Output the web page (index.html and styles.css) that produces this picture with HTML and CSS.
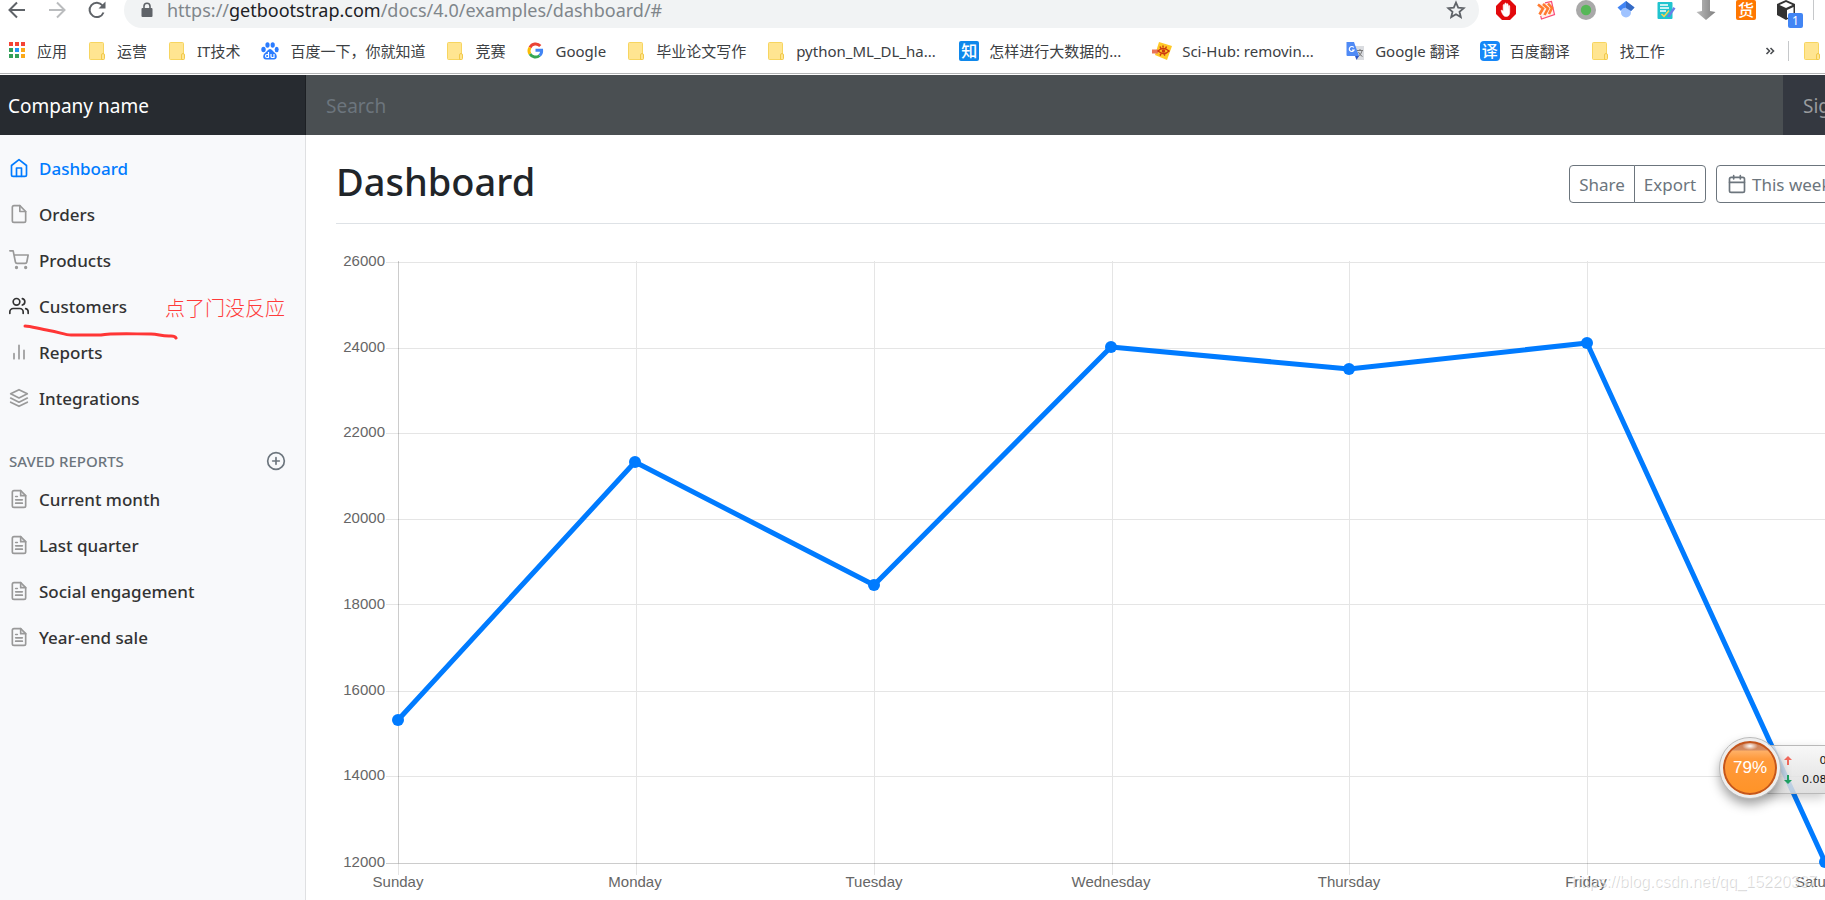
FILE: index.html
```html
<!DOCTYPE html>
<html lang="zh-CN">
<head>
<meta charset="utf-8">
<title>Dashboard Template</title>
<link rel="stylesheet" href="styles.css">
</head>
<body>
<svg class="defs" aria-hidden="true">
  <defs>
    <symbol id="folder" viewBox="0 0 20 20"><rect x="2.500" y="1.500" width="14" height="17" rx="1" fill="#ffe591" stroke="#f7d560"/><path d="M14.500 18.500v-4.500a1.500 1.500 0 0 1 3 0v3.500a1 1 0 0 1-1 1z" fill="#ffe591" stroke="#f2c94a"/></symbol>
    <symbol id="file-text" viewBox="0 0 24 24"><path d="M14 2H6a2 2 0 0 0-2 2v16a2 2 0 0 0 2 2h12a2 2 0 0 0 2-2V8z"/><path d="M14 2v6h6M16 13H8M16 17H8M10 9H8"/></symbol>
  </defs>
</svg>

<header class="browser">
  <div class="toolbar">
    <div class="nav-buttons">
      <button class="icon-button" aria-label="Back"><svg width="20" height="20" viewBox="0 0 20 20" fill="none" stroke="#5f6368" stroke-width="2"><path d="M18 10H3M10 2.500L2.500 10l7.500 7.500"/></svg></button>
      <button class="icon-button" aria-label="Forward"><svg width="20" height="20" viewBox="0 0 20 20" fill="none" stroke="#babcbe" stroke-width="2"><path d="M2 10h15M10 2.500L17.500 10 10 17.500"/></svg></button>
      <button class="icon-button" aria-label="Reload"><svg width="20" height="20" viewBox="0 0 20 20" fill="none" stroke="#5f6368" stroke-width="2"><path d="M16.500 12.500A7.200 7.200 0 1 1 15.500 5.500"/><path d="M18.500 1.500v7h-7z" fill="#5f6368" stroke="none"/></svg></button>
    </div>
    <div class="address">
      <svg width="12" height="16" viewBox="0 0 12 16"><rect x="0.500" y="6" width="11" height="9" rx="1" fill="#5f6368"/><path d="M3 6V4.200a3 3 0 0 1 6 0V6" fill="none" stroke="#5f6368" stroke-width="1.600"/></svg>
      <span class="url">https://<span class="host">getbootstrap.com</span>/docs/4.0/examples/dashboard/#</span>
      <button class="icon-button" aria-label="Bookmark this page"><svg width="20" height="20" viewBox="0 0 20 20" fill="none" stroke="#5f6368" stroke-width="1.800"><path d="M10 2.500l2.200 5.100 5.500.5-4.200 3.600 1.300 5.400-4.800-2.900-4.800 2.900 1.300-5.400L2.300 8.100l5.500-.5z"/></svg></button>
    </div>
    <div class="extensions">
      <svg viewBox="0 0 20 20"><path d="M6 0h8l6 6v8l-6 6H6l-6-6V6z" fill="#e2090c"/><path d="M5 10.500c1-.6 1.800.2 2.200 1V5.200c0-1 1.400-1 1.400 0V9l.2-5.200c0-1 1.500-1 1.500 0V9l.3-4.700c0-.9 1.400-.9 1.400 0V9.500l.4-3.500c.1-.8 1.300-.8 1.300.1V12c0 3-1.300 4.500-3.600 4.500-2.600 0-3.400-2-5.100-6z" fill="#fff" stroke="#fff" stroke-width=".6"/></svg>
      <svg viewBox="0 0 20 20"><path d="M1.500 4.500l14-3 3 13-13 4.500z" fill="#fff1ec"/><path d="M9 2.800l6.500-1.300 3 13-13 4.500-.8-3" fill="none" stroke="#fb4b77" stroke-width="1.200"/><path d="M2 4.500l5 4-3.500 6M7 4l5 4.500L8.500 15M12 3.500l4 4.500-3 6" fill="none" stroke="#ff7a2f" stroke-width="2.600"/></svg>
      <svg viewBox="0 0 20 20"><circle cx="10" cy="10" r="10" fill="#a9a9a9"/><circle cx="10" cy="10" r="5.200" fill="#56b757"/></svg>
      <svg viewBox="0 0 20 20"><circle cx="10" cy="12.500" r="5" fill="#a0c3ff"/><path d="M10 1l8.500 6.500-3.500 3.500a5.500 5.500 0 0 0-10 0L1.500 7.500z" fill="#4285f4"/><path d="M10 1l8.500 6.500L15 11 10 8z" fill="#356ac3"/></svg>
      <svg viewBox="0 0 20 20"><rect x="1.500" y="2" width="15" height="17" rx="1" fill="#20c4cf"/><path d="M4 5h8M4 8h9M4 11h6" stroke="#fff" stroke-width="1.400"/><path d="M5.500 14l2.500 2.500 5-6" fill="none" stroke="#ffd34c" stroke-width="1.500"/><path d="M11 17l6.500-10 2 1.500L13.500 17z" fill="#6b7de8"/></svg>
      <svg viewBox="0 0 20 20"><defs><linearGradient id="arrow"><stop stop-color="#bbb"/><stop offset="1" stop-color="#808080"/></linearGradient></defs><path d="M6 0h8v11l5.500 1L10 20 .5 12 6 11z" fill="url(#arrow)"/></svg>
      <span class="tile tile-goods">货</span>
      <span class="extension-box"><svg viewBox="0 0 20 20"><path d="M10 0l9 4v11l-9 5-9-5V4z" fill="#333"/><path d="M3.500 5L10 2l6.500 3L10 8zM11 10l6.500-3v7.500L11 18z" fill="#fff"/></svg><span class="badge">1</span></span>
    </div>
    <span class="divider"></span>
  </div>

  <nav class="bookmarks" aria-label="Bookmarks">
    <a class="bookmark" href="#"><svg viewBox="0 0 20 20"><path fill="#f44336" d="M2 1h4v4H2zM8 1h4v4H8zM14 1h4v4h-4z"/><path fill="#34a05a" d="M2 7h4v4H2zM2 13h4v4H2zM8 13h4v4H8z"/><path fill="#2196f3" d="M8 7h4v4H8z"/><path fill="#fba919" d="M14 7h4v4h-4zM14 13h4v4h-4z"/></svg><span>应用</span></a>
    <a class="bookmark" href="#"><svg><use href="#folder"/></svg><span>运营</span></a>
    <a class="bookmark" href="#"><svg><use href="#folder"/></svg><span>IT技术</span></a>
    <a class="bookmark" href="#"><svg viewBox="0 0 20 20" fill="#2a7cff"><ellipse cx="3.500" cy="8.500" rx="2.200" ry="2.800"/><ellipse cx="7.500" cy="4" rx="2.100" ry="2.800"/><ellipse cx="12.700" cy="4" rx="2.100" ry="2.800"/><ellipse cx="16.700" cy="8.500" rx="2" ry="2.700"/><path d="M10 8c2 0 3 2.500 5 4 2.500 2 2.500 6.500-1 6.500H6c-3.500 0-3.500-4.500-1-6.500 2-1.500 3-4 5-4z"/><path d="M8.500 11v5.500H7a1.500 1.500 0 0 1 0-3h1.500M11 13v2.500q0 1 1 1h2V13" fill="none" stroke="#fff" stroke-width="1.200"/></svg><span>百度一下，你就知道</span></a>
    <a class="bookmark" href="#"><svg><use href="#folder"/></svg><span>竞赛</span></a>
    <a class="bookmark" href="#"><svg viewBox="0 0 20 20" fill="none" stroke-width="3"><path d="M14.300 5A6.300 6.300 0 0 0 4 6.500" stroke="#ea4335"/><path d="M4 6.500a6.300 6.300 0 0 0 0 6.500" stroke="#fbbc05"/><path d="M4 13a6.300 6.300 0 0 0 9.600 1.500" stroke="#34a853"/><path d="M13.600 14.500a6.300 6.300 0 0 0 2-5.200H9.500" stroke="#4285f4"/></svg><span>Google</span></a>
    <a class="bookmark" href="#"><svg><use href="#folder"/></svg><span>毕业论文写作</span></a>
    <a class="bookmark long" href="#"><svg><use href="#folder"/></svg><span>python_ML_DL_ha...</span></a>
    <a class="bookmark long" href="#"><span class="tile tile-zhihu">知</span><span>怎样进行大数据的...</span></a>
    <a class="bookmark long" href="#"><svg viewBox="0 0 20 20"><path d="M7 1l13 4-5 14L3 14z" fill="#ffc928"/><path d="M0 8.500h6v4H0z" fill="#e8755a"/><path d="M6 10q5-5 11 0-5 5-11 0zM8 5.500l1 2M11 4.500v2M14.500 5.500l-1 2M8 14.500l1-1.500M13 14.500l-1-1.500" fill="none" stroke="#cc3911" stroke-width="1.500"/><circle cx="11.500" cy="10" r="1.800" fill="#cc3911"/></svg><span>Sci-Hub: removin...</span></a>
    <a class="bookmark" href="#"><svg viewBox="0 0 20 20"><path d="M9 5h10v14h-7z" fill="#dadce0"/><path d="M12 9.500h6M15 8v1.500M17 10q-1 4-4 5.500M13.500 11q1 3 4 4.500" fill="none" stroke="#777" stroke-width="1"/><path d="M1.500 1H9l5 14H2.500a1 1 0 0 1-1-1z" fill="#4f8af5"/><path d="M10 15h4l-2.500 4z" fill="#2d56c4"/><path d="M8.800 6.500a2.500 2.500 0 1 0 .3 2.500H7" fill="none" stroke="#fff" stroke-width="1.200"/></svg><span>Google 翻译</span></a>
    <a class="bookmark" href="#"><span class="tile tile-translate">译</span><span>百度翻译</span></a>
    <a class="bookmark" href="#"><svg><use href="#folder"/></svg><span>找工作</span></a>
    <span class="bookmark-overflow">
      <button class="icon-button" aria-label="More bookmarks"><svg width="10" height="10" viewBox="0 0 10 10" fill="none" stroke="#4a4d51" stroke-width="1.600"><path d="M1.500 2L4.500 5l-3 3M5.500 2l3 3-3 3"/></svg></button>
      <span class="divider"></span>
      <a class="bookmark" href="#" aria-label="Other bookmarks"><svg><use href="#folder"/></svg></a>
    </span>
  </nav>
</header>

<div class="navbar">
  <a class="brand" href="#">Company name</a>
  <input class="search" type="text" placeholder="Search" aria-label="Search">
  <a class="sign-out" href="#">Sign out</a>
</div>

<div class="page">
  <nav class="sidebar" aria-label="Sections">
    <a class="item active" href="#"><svg viewBox="0 0 24 24"><path d="M3 9l9-7 9 7v11a2 2 0 0 1-2 2H5a2 2 0 0 1-2-2z"/><path d="M9 22V12h6v10"/></svg>Dashboard</a>
    <a class="item" href="#"><svg viewBox="0 0 24 24"><path d="M13 2H6a2 2 0 0 0-2 2v16a2 2 0 0 0 2 2h12a2 2 0 0 0 2-2V9z"/><path d="M13 2v7h7"/></svg>Orders</a>
    <a class="item" href="#"><svg viewBox="0 0 24 24"><circle cx="9" cy="21" r="1"/><circle cx="20" cy="21" r="1"/><path d="M1 1h4l2.680 13.390a2 2 0 0 0 2 1.610h9.720a2 2 0 0 0 2-1.610L23 6H6"/></svg>Products</a>
    <a class="item hovered" href="#"><svg viewBox="0 0 24 24"><path d="M17 21v-2a4 4 0 0 0-4-4H5a4 4 0 0 0-4 4v2"/><circle cx="9" cy="7" r="4"/><path d="M23 21v-2a4 4 0 0 0-3-3.870M16 3.130a4 4 0 0 1 0 7.750"/></svg>Customers
      <span class="note">点了门没反应</span>
      <svg class="scribble" viewBox="0 0 156 16"><path d="M2 2C8 2 16 5 26 6.500S42 11 48 11H78C88 9 110 10 128 10c8 0 10 2.500 20 2q4 0 5 2"/></svg>
    </a>
    <a class="item" href="#"><svg viewBox="0 0 24 24"><path d="M18 20V10M12 20V4M6 20v-6"/></svg>Reports</a>
    <a class="item" href="#"><svg viewBox="0 0 24 24"><path d="M12 2L2 7l10 5 10-5zM2 17l10 5 10-5M2 12l10 5 10-5"/></svg>Integrations</a>
    <h2 class="heading">Saved reports
      <button class="icon-button" aria-label="Add a report"><svg viewBox="0 0 24 24"><circle cx="12" cy="12" r="10"/><path d="M12 8v8M8 12h8"/></svg></button>
    </h2>
    <a class="item" href="#"><svg><use href="#file-text"/></svg>Current month</a>
    <a class="item" href="#"><svg><use href="#file-text"/></svg>Last quarter</a>
    <a class="item" href="#"><svg><use href="#file-text"/></svg>Social engagement</a>
    <a class="item" href="#"><svg><use href="#file-text"/></svg>Year-end sale</a>
  </nav>

  <main class="main">
    <div class="title-row">
      <h1>Dashboard</h1>
      <div class="actions">
        <div class="group"><button>Share</button><button>Export</button></div>
        <button class="week"><svg viewBox="0 0 24 24"><rect x="3" y="4" width="18" height="18" rx="2"/><path d="M16 2v4M8 2v4M3 10h18"/></svg>This week</button>
      </div>
    </div>
    <svg class="chart" viewBox="0 0 1489 652" role="img" aria-label="Visits from Sunday to Saturday">
      <g class="grid">
        <path d="M50 14H1489M50 100H1489M50 185H1489M50 271H1489M50 356H1489M50 443H1489M50 528H1489M300 13V627M538 13V627M776 13V627M1013 13V627M1251 13V627"/>
        <path class="axis" d="M62 13V615M50 615H1489"/><path d="M62 615V627"/>
      </g>
      <g class="y-labels">
        <text x="49" y="18">26000</text><text x="49" y="104">24000</text><text x="49" y="189">22000</text><text x="49" y="275">20000</text><text x="49" y="361">18000</text><text x="49" y="447">16000</text><text x="49" y="532">14000</text><text x="49" y="619">12000</text>
      </g>
      <g class="x-labels">
        <text x="62" y="639">Sunday</text><text x="299" y="639">Monday</text><text x="538" y="639">Tuesday</text><text x="775" y="639">Wednesday</text><text x="1013" y="639">Thursday</text><text x="1250" y="639">Friday</text><text x="1489" y="639">Saturday</text>
      </g>
      <path class="series" d="M62 472L299 214L538 337L775 99L1013 121L1251 95L1489 614"/>
      <g class="points"><circle cx="62" cy="472" r="6"/><circle cx="299" cy="214" r="6"/><circle cx="538" cy="337" r="6"/><circle cx="775" cy="99" r="6"/><circle cx="1013" cy="121" r="6"/><circle cx="1251" cy="95" r="6"/><circle cx="1489" cy="614" r="6"/></g>
    </svg>
  </main>
</div>

<div class="watermark">https://blog.csdn.net/qq_15220337</div>
<div class="speed">
  <div class="rates">
    <svg viewBox="0 0 8 9" fill="#f2695c"><path d="M4 0l4 4H5v5H3V4H0z"/></svg><span>0 K/s</span>
    <svg viewBox="0 0 8 9" fill="#1fa463"><path d="M4 9l4-4H5V0H3v5H0z"/></svg><span>0.08 K/s</span>
  </div>
  <div class="ball">79%</div>
</div>
</body>
</html>
```

FILE: styles.css
```css
* { box-sizing: border-box; }
body {
  margin: 0;
  height: 100vh;
  display: flex;
  flex-direction: column;
  position: relative;
  overflow: hidden;
  background: #fff;
  color: #212529;
  font-family: "Noto Sans", "Noto Sans CJK SC", sans-serif;
}
a { color: inherit; text-decoration: none; }
button { font: inherit; color: inherit; }
.defs { position: absolute; width: 0; height: 0; }
.icon-button { display: flex; padding: 0; border: 0; background: none; }
.divider { width: 1px; height: 20px; background: #c6c8ca; }

/* Browser chrome */
.browser { flex: none; height: 75px; border-bottom: 1px solid #fff; box-shadow: inset 0 -1px #b4b5b6; }
.toolbar { display: flex; align-items: center; height: 36px; margin-top: -8px; padding: 0 11px 0 7px; }
.nav-buttons { display: flex; gap: 20px; width: 117px; }
.address { flex: 1; display: flex; align-items: center; gap: 14px; height: 36px; padding: 0 13px 0 17px; border-radius: 18px; background: #f1f3f4; }
.url { flex: 1; color: #80868b; font-size: 18px; line-height: 24px; }
.host { color: #202124; }
.extensions { display: flex; gap: 20px; margin: 0 17px 0 17px; }
.extensions svg { display: block; width: 20px; height: 20px; }
.extension-box { position: relative; }
.badge { position: absolute; left: 12px; top: 13px; width: 15px; height: 15px; border-radius: 2px; background: #4285f4; color: #fff; font-size: 12px; line-height: 15px; text-align: center; }
.tile { flex: none; width: 20px; height: 20px; border-radius: 2px; color: #fff; font-size: 16px; font-weight: 500; line-height: 20px; text-align: center; }
.tile-goods { background: #ff7700; }
.tile-zhihu { background: #0f88eb; }
.tile-translate { background: #1687f7; border-radius: 4px; }
.bookmarks { display: flex; align-items: center; gap: 20px; height: 46px; padding: 0 3px 0 7px; color: #3c4043; font-size: 15px; line-height: 20px; white-space: nowrap; }
.bookmark { flex: none; display: flex; align-items: center; gap: 10px; }
.bookmark svg { width: 20px; height: 20px; }
.bookmark.long { width: 173px; }
.bookmark-overflow { display: flex; align-items: center; gap: 13px; margin-left: auto; }

/* Top bar */
.navbar { flex: none; display: flex; height: 60px; background: #343a40; font-size: 19px; }
.brand { width: 306px; padding: 0 8px; background: #272b30; box-shadow: inset -1px 0 #1d2024; color: #fff; line-height: 62px; }
.search { flex: 1; min-width: 0; padding: 2px 20px 0; border: 0; background: #4a4f52; color: #fff; font: inherit; }
.search::placeholder { color: #6c757d; opacity: 1; }
.sign-out { width: 42px; padding-left: 20px; overflow: hidden; background: #343840; color: #999b9e; line-height: 62px; white-space: nowrap; }

/* Sidebar */
.page { flex: 1; display: flex; min-height: 0; }
.sidebar { flex: none; width: 306px; padding-top: 10px; border-right: 1px solid #dfe0e2; background: #f8f9fb; }
.sidebar svg, .week svg { flex: none; width: 20px; height: 20px; fill: none; stroke: currentColor; stroke-width: 2; stroke-linecap: round; stroke-linejoin: round; }
.item { position: relative; display: flex; align-items: center; gap: 10px; height: 46px; padding-left: 9px; color: #333; font-size: 17px; font-weight: 500; }
.sidebar .item svg { stroke: #999; }
.sidebar .active, .sidebar .active svg { color: #007bff; stroke: #007bff; }
.sidebar .hovered svg { stroke: #333; }
.note { position: absolute; left: 165px; top: 10px; color: #ff3b3b; font-family: "Noto Sans CJK SC", sans-serif; font-size: 20px; font-weight: 300; line-height: 30px; white-space: nowrap; }
.sidebar .hovered .scribble { position: absolute; z-index: 1; left: 23px; top: 41px; width: 156px; height: 16px; stroke: #ff3636; stroke-width: 3; }
.heading { display: flex; align-items: center; justify-content: space-between; height: 31px; margin: 24px 0 0; padding: 0 19px 0 9px; color: #6c757d; font-size: 15px; font-weight: 500; text-transform: uppercase; }

/* Content */
.main { flex: 1; min-width: 0; padding: 20px 0 0 30px; }
.title-row { display: flex; align-items: flex-start; justify-content: space-between; height: 69px; border-bottom: 1px solid #dee2e6; }
.title-row h1 { margin: 0; font-size: 38px; font-weight: 500; line-height: 52px; }
.actions { display: flex; gap: 10px; width: 256px; height: 38px; margin-top: 10px; overflow: hidden; color: #6c757d; font-size: 17px; white-space: nowrap; }
.group { flex: none; display: flex; width: 137px; }
.actions button { padding: 0; border: 1px solid #6c757d; background: #fff; }
.group button:first-child { flex: 66px 0 0; border-radius: 4px 0 0 4px; }
.group button:last-child { flex: 1; margin-left: -1px; border-radius: 0 4px 4px 0; }
.actions .week { flex: none; display: flex; align-items: center; gap: 5px; padding: 0 10px; border-radius: 4px; }
.chart { display: block; width: 100%; margin-top: 24px; overflow: visible; font-family: "Liberation Sans", Arial, sans-serif; font-size: 15px; }
.chart text { fill: #666; }
.grid { fill: none; stroke: rgba(0, 0, 0, 0.1); stroke-width: 1; shape-rendering: crispEdges; }
.axis { stroke: rgba(0, 0, 0, 0.2); }
.y-labels { text-anchor: end; }
.x-labels { text-anchor: middle; }
.series { fill: none; stroke: #007bff; stroke-width: 5; stroke-linejoin: round; }
.points { fill: #007bff; }

/* Overlays */
.watermark { position: absolute; right: 8px; bottom: 8px; color: rgba(255, 255, 255, 0.6); font-family: "Liberation Sans", Arial, sans-serif; font-size: 16px; line-height: 20px; text-shadow: 1px 1px 0 rgba(0, 0, 0, 0.16); white-space: nowrap; }
.speed { position: absolute; right: 0; bottom: 102px; width: 105px; height: 60px; display: flex; align-items: center; }
.rates { position: absolute; left: 46px; right: 0; top: 7px; height: 49px; display: grid; grid-template-columns: 8px max-content; align-content: center; align-items: center; justify-content: start; gap: 4px 10px; padding-left: 17px; overflow: hidden; border: 1px solid #b9b9b9; border-right: 0; background: linear-gradient(rgba(246, 246, 246, 0.85), rgba(218, 218, 218, 0.85)); box-shadow: 0 4px 10px rgba(0, 0, 0, 0.2); color: #111; font-family: "DejaVu Sans", sans-serif; font-size: 11px; line-height: 15px; text-align: right; white-space: nowrap; }
.rates svg { width: 8px; height: 9px; }
.ball { position: relative; width: 60px; height: 60px; border: 3px solid #eee; border-radius: 50%; outline: 1px solid #bbb; background: radial-gradient(ellipse 8px 4px at 27px 5px, #fff, transparent), linear-gradient(#c9784f 0, #d48d63 9px, #ffb066 10px, #ff9a3c 18px, #ff9326 100%); box-shadow: inset 0 0 0 2px #c4561d, 0 6px 12px rgba(0, 0, 0, 0.4); color: #fff; font-family: "Liberation Sans", Arial, sans-serif; font-size: 17px; line-height: 54px; text-align: center; }
```
